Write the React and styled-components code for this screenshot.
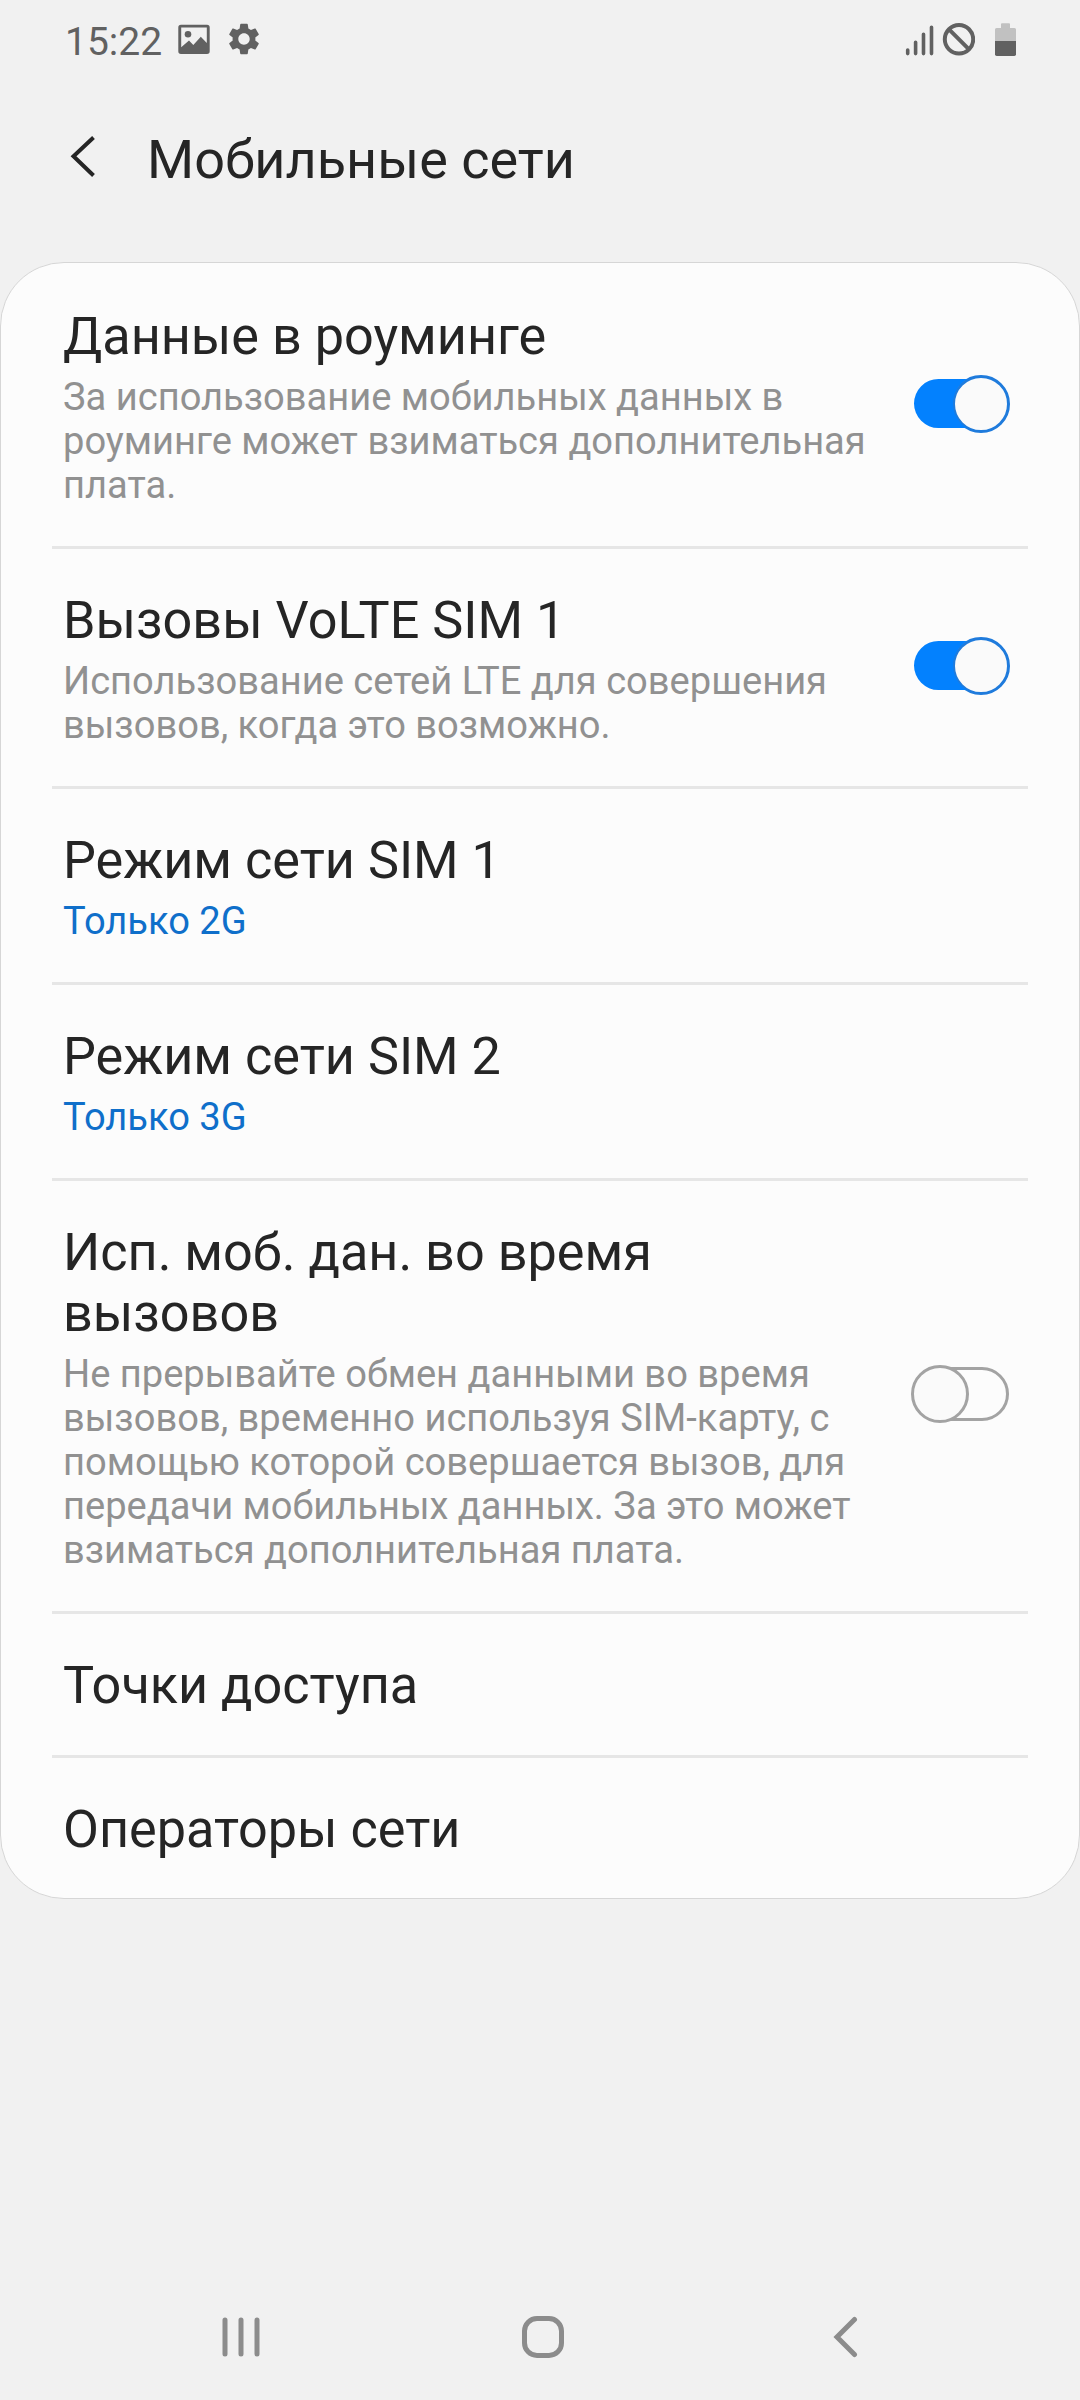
import styled, { createGlobalStyle } from "styled-components";
import { useState } from "react";

const GlobalStyle = createGlobalStyle`
  * {
    box-sizing: border-box;
  }

  body {
    margin: 0;
    background: #f1f1f1;
    font-family: Roboto, "Noto Sans", sans-serif;
  }

  svg {
    display: block;
  }
`;

const Screen = styled.div`
  width: 1080px;
  height: 2400px;
  display: flex;
  flex-direction: column;
  background: #f1f1f1;
  overflow: hidden;
`;

const StatusBar = styled.div`
  height: 80px;
  padding: 0 62px 0 65px;
  display: flex;
  justify-content: space-between;
`;

const StatusGroup = styled.div`
  display: flex;
  align-items: flex-start;
`;

const Time = styled.span`
  width: 113px;
  padding-top: 19px;
  font-size: 39px;
  line-height: 46px;
  color: #616161;
`;

const GearBox = styled.div`
  padding: 20px 0 0 15px;
`;

const SignalIcons = styled.div`
  display: flex;
  padding-top: 20px;
  gap: 20px;
`;

const Header = styled.header`
  height: 182px;
  padding: 40px 66px 0;
  display: flex;
  align-items: flex-start;
`;

const BackButton = styled.button`
  width: 81px;
  height: 72px;
  padding: 0;
  border: none;
  background: none;
  display: flex;
  align-items: center;
`;

const H1 = styled.h1`
  margin: 7px 0 0;
  font-size: 54px;
  line-height: 65px;
  font-weight: 400;
  color: #252525;
  white-space: nowrap;
`;

const Card = styled.main`
  height: 1637px;
  padding-top: 2px;
  border: 1px solid #d6d6d6;
  border-radius: 64px;
  background: #fcfcfc;
`;

const Row = styled.section`
  margin: 0 51px;
  padding: 41px 18px 39px 11px;
  display: flex;
  align-items: center;
  justify-content: space-between;
  border-bottom: 3px solid #e6e6e6;

  &:last-child {
    border-bottom: none;
  }
`;

const RowText = styled.div`
  width: 810px;
`;

const Title = styled.h2`
  margin: 0;
  font-size: 52.2px;
  line-height: 61px;
  font-weight: 400;
  color: #252525;
  white-space: pre;
`;

const Summary = styled.p`
  margin: 0;
  padding-top: 8px;
  font-size: 38.1px;
  line-height: 44px;
  color: ${({ $active }) => ($active ? "#0f6fca" : "#919191")};
  white-space: pre;
`;

const Toggle = styled.button`
  width: 99px;
  height: 58px;
  margin-bottom: ${({ $on }) => ($on ? "5px" : "6px")};
  padding: 0;
  border: none;
  background: none;
  flex-shrink: 0;
`;

const NavBar = styled.nav`
  margin-top: auto;
  height: 126px;
  padding: 0 221px;
  display: flex;
  justify-content: space-between;
  align-items: center;
`;

const HomeButton = styled.div`
  width: 42px;
  height: 42px;
  margin-right: 8px;
  border: 5px solid #8c8c8c;
  border-radius: 15px;
`;

const PictureIcon = () => (
  <svg width="32" height="60" viewBox="0 0 32 60">
    <path
      fill="#616161"
      fillRule="evenodd"
      d="M3 24.7H29A2.7 2.7 0 0 1 31.7 27.4V51.3A2.7 2.7 0 0 1 29 54H3A2.7 2.7 0 0 1 .3 51.3V27.4A2.7 2.7 0 0 1 3 24.7ZM3.2 27.5V47.3L11 40.6 15.3 45 22.8 36.7 28.8 43V27.5Z"
    />
    <circle cx="10" cy="34.3" r="3.3" fill="#616161" />
  </svg>
);

const GearIcon = () => (
  <svg width="38" height="38" viewBox="0 0 24 24">
    <path
      fill="#616161"
      d="M19.14 12.94c.04-.3.06-.61.06-.94 0-.32-.02-.64-.07-.94l2.03-1.58c.18-.14.23-.41.12-.61l-1.92-3.32c-.12-.22-.37-.29-.59-.22l-2.39.96c-.5-.38-1.03-.7-1.62-.94l-.36-2.54c-.04-.24-.24-.41-.48-.41h-3.84c-.24 0-.43.17-.47.41l-.36 2.54c-.59.24-1.13.57-1.62.94l-2.39-.96c-.22-.08-.47 0-.59.22L2.74 8.87c-.12.21-.08.47.12.61l2.03 1.58c-.05.3-.09.63-.09.94s.02.64.07.94l-2.03 1.58c-.18.14-.23.41-.12.61l1.92 3.32c.12.22.37.29.59.22l2.39-.96c.5.38 1.03.7 1.62.94l.36 2.54c.05.24.24.41.48.41h3.84c.24 0 .44-.17.47-.41l.36-2.54c.59-.24 1.13-.56 1.62-.94l2.39.96c.22.08.47 0 .59-.22l1.92-3.32c.12-.22.07-.47-.12-.61l-2.01-1.58zM12 15.6c-1.98 0-3.6-1.62-3.6-3.6s1.62-3.6 3.6-3.6 3.6 1.62 3.6 3.6-1.62 3.6-3.6 3.6z"
    />
  </svg>
);

const SignalIcon = () => (
  <svg width="70" height="38" viewBox="905 20 70 38" fill="none" stroke="#616161">
    <path
      strokeWidth="3.6"
      strokeLinecap="round"
      d="M907.7 50V53.6M915.6 42.2V53.6M923.5 34.3V53.6M931.5 27.3V53.6"
    />
    <circle cx="959" cy="39.3" r="14.2" strokeWidth="4" />
    <path strokeWidth="4" d="M949 29.3L969 49.3" />
  </svg>
);

const BatteryIcon = () => (
  <svg width="23" height="38" viewBox="995 20 23 38">
    <path
      fill="#c1c1c1"
      d="M1002 23.3H1009Q1010 23.3 1010 24.3V28H1014.5Q1016 28 1016 29.5V42H995V29.5Q995 28 996.5 28H1001V24.3Q1001 23.3 1002 23.3Z"
    />
    <path
      fill="#616161"
      d="M995 41H1016V54.3Q1016 56 1014.3 56H996.7Q995 56 995 54.3Z"
    />
  </svg>
);

const Switch = ({ defaultOn }) => {
  const [on, setOn] = useState(defaultOn);

  return (
    <Toggle
      role="switch"
      aria-checked={on}
      $on={on}
      onClick={() => setOn(!on)}
    >
      {on ? (
        <svg width="99" height="58" viewBox="0 0 99 58">
          <circle cx="70" cy="29" r="27.5" fill="#fafafa" stroke="#1f7bdc" strokeWidth="3" />
          <path
            fill="#0381fe"
            d="M27.5 4H56A28.500 28.500 0 0 0 56 53H27.5A24.500 24.500 0 0 1 27.5 4Z"
          />
        </svg>
      ) : (
        <svg width="99" height="58" viewBox="0 0 99 58" stroke="#a3a3a3" strokeWidth="3">
          <rect x="4.5" y="3.5" width="92" height="51" rx="25.5" fill="none" />
          <circle cx="29" cy="29" r="27.5" fill="#fafafa" />
        </svg>
      )}
    </Toggle>
  );
};

const settings = [
  {
    title: "Данные в роуминге",
    summary:
      "За использование мобильных данных в\nроуминге может взиматься дополнительная\nплата.",
    toggle: true,
    on: true,
  },
  {
    title: "Вызовы VoLTE SIM 1",
    summary:
      "Использование сетей LTE для совершения\nвызовов, когда это возможно.",
    toggle: true,
    on: true,
  },
  { title: "Режим сети SIM 1", summary: "Только 2G", active: true },
  { title: "Режим сети SIM 2", summary: "Только 3G", active: true },
  {
    title: "Исп. моб. дан. во время\nвызовов",
    summary:
      "Не прерывайте обмен данными во время\nвызовов, временно используя SIM-карту, с\nпомощью которой совершается вызов, для\nпередачи мобильных данных. За это может\nвзиматься дополнительная плата.",
    toggle: true,
    on: false,
  },
  { title: "Точки доступа" },
  { title: "Операторы сети" },
];

const App = () => {
  return (
    <Screen>
      <GlobalStyle />
      <StatusBar>
        <StatusGroup>
          <Time>15:22</Time>
          <PictureIcon />
          <GearBox>
            <GearIcon />
          </GearBox>
        </StatusGroup>
        <SignalIcons>
          <SignalIcon />
          <BatteryIcon />
        </SignalIcons>
      </StatusBar>
      <Header>
        <BackButton aria-label="Назад">
          <svg width="32" height="44" viewBox="66 134 32 44" fill="none">
            <path
              d="M93.5 137.5L73.5 156.3L93.5 175.5"
              stroke="#252525"
              strokeWidth="4"
            />
          </svg>
        </BackButton>
        <H1>Мобильные сети</H1>
      </Header>
      <Card>
        {settings.map((item) => (
          <Row key={item.title}>
            <RowText>
              <Title>{item.title}</Title>
              {item.summary && (
                <Summary $active={item.active}>{item.summary}</Summary>
              )}
            </RowText>
            {item.toggle && <Switch defaultOn={item.on} />}
          </Row>
        ))}
      </Card>
      <NavBar>
        <svg width="40" height="42" viewBox="221 2316 40 42">
          <path
            d="M225 2320V2354M241 2320V2354M257 2320V2354"
            stroke="#8c8c8c"
            strokeWidth="5"
            strokeLinecap="round"
          />
        </svg>
        <HomeButton />
        <svg width="26" height="42" viewBox="833 2316 26 42">
          <path
            d="M854.5 2319.5L837 2337L854.5 2354.5"
            fill="none"
            stroke="#8c8c8c"
            strokeWidth="5"
            strokeLinecap="round"
          />
        </svg>
      </NavBar>
    </Screen>
  );
};

export default App;
